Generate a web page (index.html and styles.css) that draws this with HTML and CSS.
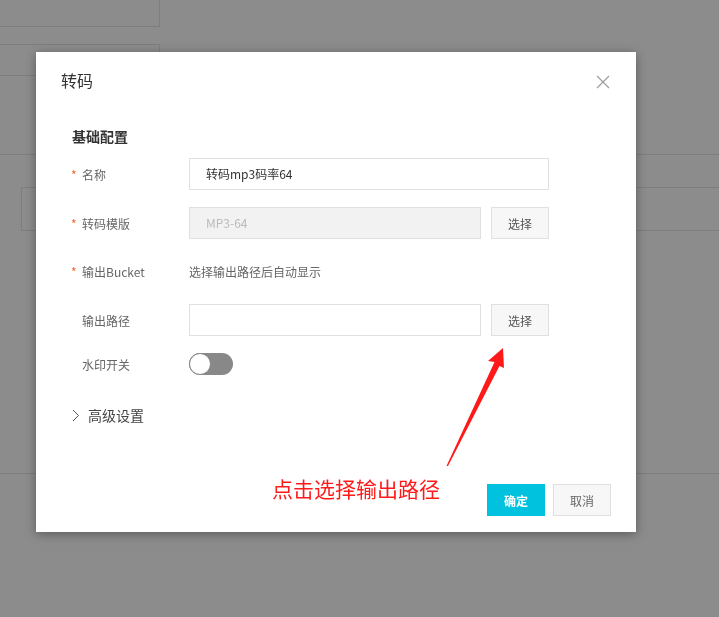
FILE: index.html
```html
<!DOCTYPE html>
<html lang="zh-CN">
<head>
<meta charset="utf-8">
<title>转码</title>
<link rel="stylesheet" href="styles.css">
</head>
<body>
<div class="page">
  <div class="bg-box1"></div>
  <div class="bg-box2"></div>
  <div class="bg-line1"></div>
  <div class="bg-box3"></div>
  <div class="bg-line2"></div>
</div>
<div class="mask"></div>

<div class="dialog">
  <div class="dialog-header">
    <span class="dialog-title">转码</span>
    <svg class="close" width="14" height="14" viewBox="0 0 14 14"><path d="M1 1L13 13M13 1L1 13" stroke="#9a9a9a" stroke-width="1.1" fill="none"/></svg>
  </div>
  <div class="dialog-body">
    <div class="section-title">基础配置</div>
    <div class="row">
      <div class="label"><span class="star">*</span>名称</div>
      <div class="input input-wide">转码mp3码率64</div>
    </div>
    <div class="row">
      <div class="label"><span class="star">*</span>转码模版</div>
      <div class="input input-disabled">MP3-64</div>
      <div class="btn">选择</div>
    </div>
    <div class="row row-hint">
      <div class="label"><span class="star">*</span>输出Bucket</div>
      <div class="hint">选择输出路径后自动显示</div>
    </div>
    <div class="row">
      <div class="label"><span class="star"></span>输出路径</div>
      <div class="input"></div>
      <div class="btn">选择</div>
    </div>
    <div class="row row-switch">
      <div class="label"><span class="star"></span>水印开关</div>
      <div class="switch"><span class="knob"></span></div>
    </div>
    <div class="advanced">
      <svg class="chev" width="8" height="13" viewBox="0 0 8 13"><path d="M1 1L6.5 6.5L1 12" stroke="#555" stroke-width="1" fill="none"/></svg>
      <span>高级设置</span>
    </div>
  </div>
  <div class="dialog-footer">
    <div class="btn-primary">确定</div>
    <div class="btn btn-cancel">取消</div>
  </div>
</div>

<div class="note">点击选择输出路径</div>
<svg class="arrow" width="719" height="617" viewBox="0 0 719 617">
  <polygon points="503,348 488,361 494.5,362 446.5,466 448,466 499.5,366 504,368" fill="#ff1a1a"/>
</svg>
</body>
</html>
```
FILE: styles.css
```css
* { box-sizing: border-box; }
html, body {
  margin: 0;
  padding: 0;
  width: 719px;
  height: 617px;
  overflow: hidden;
  background: #fff;
  font-family: "Noto Sans CJK SC", "Microsoft YaHei", sans-serif;
}
.page {
  width: 719px;
  height: 617px;
  overflow: hidden;
}
.bg-box1 {
  width: 160px;
  height: 27px;
  border-right: 1px solid #e6e6e6;
  border-bottom: 1px solid #e6e6e6;
}
.bg-box2 {
  margin-top: 17px;
  width: 160px;
  height: 32px;
  border: 1px solid #e6e6e6;
  border-left: none;
}
.bg-line1 {
  margin-top: 78px;
  height: 1px;
  background: #e6e6e6;
}
.bg-box3 {
  margin-top: 32px;
  margin-left: 21px;
  width: 720px;
  height: 44px;
  border: 1px solid #e6e6e6;
}
.bg-line2 {
  margin-top: 242px;
  height: 1px;
  background: #e6e6e6;
}
.mask {
  position: fixed;
  inset: 0;
  background: rgba(0, 0, 0, 0.45);
}
.dialog {
  position: absolute;
  left: 36px;
  top: 52px;
  width: 600px;
  height: 480px;
  background: #fff;
  box-shadow: 0 2px 10px rgba(0, 0, 0, 0.35);
  display: flex;
  flex-direction: column;
}
.dialog-header {
  height: 58px;
  padding: 18px 26px 0 25px;
  display: flex;
  justify-content: space-between;
  align-items: flex-start;
}
.dialog-title {
  font-size: 16px;
  line-height: 20px;
  color: #333;
}
.close { margin-top: 5px; }
.dialog-body {
  flex: 1;
  padding: 0 36px;
}
.section-title {
  margin-top: 16px;
  margin-bottom: 12px;
  font-size: 14px;
  line-height: 20px;
  font-weight: bold;
  color: #333;
}
.row {
  display: flex;
  align-items: center;
  height: 32px;
  margin-bottom: 17px;
}
.row-hint { height: 31px; }
.row-switch { height: 22px; }
.label {
  width: 117px;
  font-size: 12px;
  color: #666;
  display: flex;
  align-items: center;
}
.star {
  display: inline-block;
  width: 10px;
  color: #f0643c;
  font-size: 12px;
  margin-left: -1px;
  margin-right: 1px;
}
.input {
  width: 292px;
  height: 32px;
  border: 1px solid #e0e0e0;
  padding-left: 16px;
  font-size: 12px;
  line-height: 30px;
  color: #333;
}
.input-wide { width: 360px; }
.input-disabled {
  background: #f2f2f2;
  color: #bbb;
}
.btn {
  margin-left: 10px;
  width: 58px;
  height: 32px;
  border: 1px solid #e0e0e0;
  background: #f7f7f7;
  font-size: 12px;
  color: #555;
  display: flex;
  align-items: center;
  justify-content: center;
}
.hint {
  font-size: 12px;
  color: #666;
}
.switch {
  width: 44px;
  height: 22px;
  border-radius: 11px;
  background: #888;
  position: relative;
}
.knob {
  position: absolute;
  left: 0;
  top: 0;
  width: 22px;
  height: 22px;
  border-radius: 50%;
  background: #fff;
  border: 1px solid #888;
}
.advanced {
  margin-top: 30px;
  display: flex;
  align-items: center;
  gap: 8px;
  font-size: 14px;
  line-height: 20px;
  color: #444;
}
.chev { flex: none; }
.dialog-footer {
  display: flex;
  justify-content: flex-end;
  gap: 8px;
  padding: 0 25px 16px 0;
}
.btn-primary {
  width: 58px;
  height: 32px;
  background: #00c1de;
  color: #fff;
  font-size: 12px;
  font-weight: bold;
  display: flex;
  align-items: center;
  justify-content: center;
}
.btn-cancel {
  margin-left: 0;
  color: #666;
}
.note {
  position: absolute;
  left: 272px;
  top: 474px;
  font-size: 21px;
  line-height: 28px;
  color: #ff1a1a;
  white-space: nowrap;
}
.arrow {
  position: absolute;
  left: 0;
  top: 0;
  pointer-events: none;
}
```
